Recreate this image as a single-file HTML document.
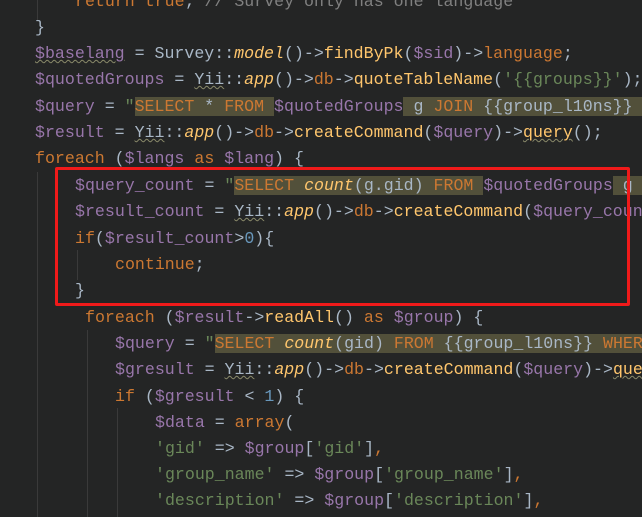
<!DOCTYPE html><html><head><style>
body{margin:0;width:642px;height:517px;background:#242525;overflow:hidden;position:relative;font-family:"Liberation Mono",monospace;font-size:16.6px;color:#a9b7c6}
.l{position:absolute;white-space:pre;height:26px;line-height:26px}
.v{color:#9876aa}.k{color:#cc7832}.f{color:#ffc66d}.s{color:#6a8759}.n{color:#6897bb}.i{font-style:italic;color:#ffc66d}
.h{background:#52503a}.u{text-decoration:underline wavy #8a8a6a;text-decoration-thickness:1px}
.g{position:absolute;width:1px;background:#3a3a3a}
</style></head><body>
<div class="g" style="left:37px;top:0;height:20px"></div>
<div class="g" style="left:37px;top:172px;height:345px"></div>
<div class="g" style="left:77px;top:250px;height:30px"></div>
<div class="g" style="left:117px;top:408px;height:109px"></div>
<div class="g" style="left:87px;top:330px;height:187px"></div>
<div class="l" style="left:75px;top:-11px"><span class="k">return true</span>; <span style="color:#808080">// Survey only has one language</span></div>
<div class="l" style="left:35px;top:15px">}</div>
<div class="l" style="left:35px;top:41px"><span class="v u">$baselang</span> = Survey::<span class="i">model</span>()-><span class="f">findByPk</span>(<span class="v">$sid</span>)-><span class="k">language</span>;</div>
<div class="l" style="left:35px;top:67px"><span class="v">$quotedGroups</span> = <span class="u">Yii</span>::<span class="i">app</span>()-><span class="k">db</span>-><span class="f">quoteTableName</span>(<span class="s">'{{groups}}'</span>);</div>
<div class="l" style="left:35px;top:94px"><span class="v">$query</span> = <span class="s">"</span><span class="h"><span class="k">SELECT</span> * <span class="k">FROM</span> </span><span class="v">$quotedGroups</span><span class="h"> g <span class="k">JOIN</span> {{group_l10ns}} </span></div>
<div class="l" style="left:35px;top:120px"><span class="v">$result</span> = <span class="u">Yii</span>::<span class="i">app</span>()-><span class="k">db</span>-><span class="f">createCommand</span>(<span class="v">$query</span>)-><span class="f u">query</span>();</div>
<div class="l" style="left:35px;top:146px"><span class="k">foreach</span> (<span class="v">$langs</span> <span class="k">as</span> <span class="v">$lang</span>) {</div>
<div class="l" style="left:75px;top:173px"><span class="v">$query_count</span> = <span class="s">"</span><span class="h"><span class="k">SELECT</span> <span class="i">count</span>(g.gid) <span class="k">FROM</span> </span><span class="v">$quotedGroups</span><span class="h"> g </span></div>
<div class="l" style="left:75px;top:199px"><span class="v">$result_count</span> = <span class="u">Yii</span>::<span class="i">app</span>()-><span class="k">db</span>-><span class="f">createCommand</span>(<span class="v">$query_count</span></div>
<div class="l" style="left:75px;top:226px"><span class="k">if</span>(<span class="v">$result_count</span>><span class="n">0</span>){</div>
<div class="l" style="left:115px;top:252px"><span class="k">continue</span>;</div>
<div class="l" style="left:75px;top:278px">}</div>
<div class="l" style="left:85px;top:305px"><span class="k">foreach</span> (<span class="v">$result</span>-><span class="f">readAll</span>() <span class="k">as</span> <span class="v">$group</span>) {</div>
<div class="l" style="left:115px;top:331px"><span class="v">$query</span> = <span class="s">"</span><span class="h"><span class="k">SELECT</span> <span class="i">count</span>(gid) <span class="k">FROM</span> {{group_l10ns}} <span class="k">WHERE</span>           </span></div>
<div class="l" style="left:115px;top:357px"><span class="v">$gresult</span> = <span class="u">Yii</span>::<span class="i">app</span>()-><span class="k">db</span>-><span class="f">createCommand</span>(<span class="v">$query</span>)-><span class="f u">query</span></div>
<div class="l" style="left:115px;top:384px"><span class="k">if</span> (<span class="v">$gresult</span> < <span class="n">1</span>) {</div>
<div class="l" style="left:155px;top:410px"><span class="v">$data</span> = <span class="k">array</span>(</div>
<div class="l" style="left:155px;top:436px"><span class="s">'gid'</span> => <span class="v">$group</span>[<span class="s">'gid'</span>]<span class="k">,</span></div>
<div class="l" style="left:155px;top:462px"><span class="s">'group_name'</span> => <span class="v">$group</span>[<span class="s">'group_name'</span>]<span class="k">,</span></div>
<div class="l" style="left:155px;top:488px"><span class="s">'description'</span> => <span class="v">$group</span>[<span class="s">'description'</span>]<span class="k">,</span></div>
<div style="position:absolute;left:55px;top:167px;width:569px;height:133px;border:3px solid #f01a1a;border-radius:2px"></div>
</body></html>
